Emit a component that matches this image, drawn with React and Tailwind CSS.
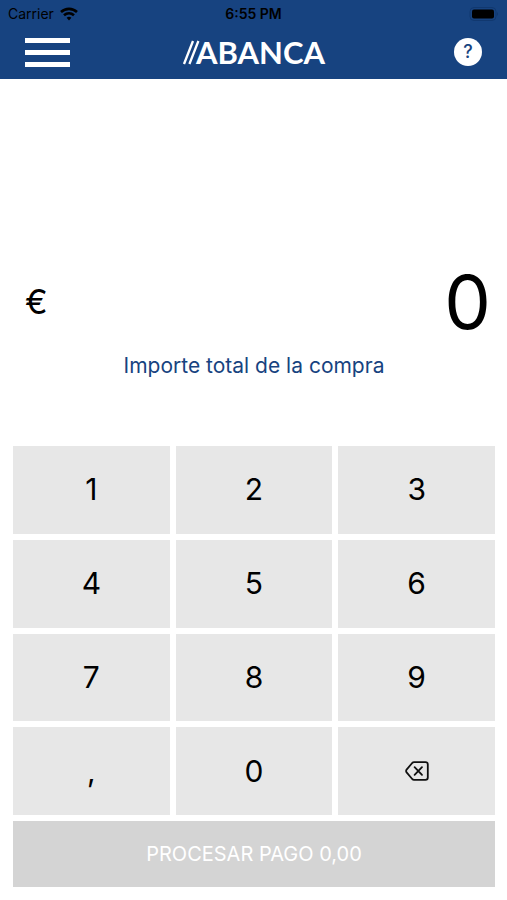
import { useState } from "react";

const KEYS = ["1", "2", "3", "4", "5", "6", "7", "8", "9", ",", "0"];

function StatusBar() {
  return (
    <div className="grid h-7 grid-cols-3 items-center px-2 text-black">
      <div className="flex items-center gap-[6px] text-sm">
        <span>Carrier</span>
        <svg viewBox="0 0 18 14" className="h-[14px] w-[18px]" fill="none" stroke="currentColor" strokeWidth="2.6">
          <path d="M1 5 C5.5 0.8 12.5 0.8 17 5" />
          <path d="M4 8.3 C7 5.6 11 5.6 14 8.3" />
          <path d="M6.6 10.7 Q9 8.8 11.4 10.7 L9 13.4 Z" fill="currentColor" stroke="none" />
        </svg>
      </div>
      <span className="text-center text-sm font-semibold">6:55 PM</span>
      <svg viewBox="0 0 32 14" className="h-[14px] w-8 justify-self-end">
        <rect x="3" y="0.5" width="26" height="13" rx="4" fill="none" stroke="#11386f" />
        <rect x="5" y="2.5" width="22" height="9" rx="2" fill="#000" />
        <path d="M30 5 q2 2 0 4 z" fill="#11386f" />
      </svg>
    </div>
  );
}

function Header() {
  return (
    <header className="bg-[#174380] pb-[3px]">
      <StatusBar />
      <div className="grid h-12 grid-cols-3 items-center px-[25px]">
        <button type="button" aria-label="Menú" className="flex w-[45px] flex-col gap-[7px] justify-self-start">
          <span className="h-[5px] w-full bg-white" />
          <span className="h-[5px] w-full bg-white" />
          <span className="h-[5px] w-full bg-white" />
        </button>
        <div className="flex items-center justify-center pb-px text-white">
          <svg
            viewBox="0 0 14 24"
            className="h-6 w-[14px] overflow-visible"
            stroke="currentColor"
            strokeWidth="2.3"
          >
            <path d="M2 24 L11 1 M7.4 24 L16.4 1" />
          </svg>
          <span className="font-['Lato',sans-serif] text-[31px] leading-8 font-bold">ABANCA</span>
        </div>
        <button
          type="button"
          aria-label="Ayuda"
          className="flex size-7 items-center justify-center justify-self-end rounded-full bg-white text-lg font-medium text-[#174380]"
        >
          ?
        </button>
      </div>
    </header>
  );
}

function BackspaceIcon() {
  return (
    <svg
      viewBox="0 0 24 20"
      className="h-5 w-6"
      fill="none"
      stroke="#111"
      strokeWidth="1.8"
      strokeLinecap="round"
      strokeLinejoin="round"
    >
      <path d="M9 1.2 H20.5 Q22.8 1.2 22.8 3.5 V16.5 Q22.8 18.8 20.5 18.8 H9 Q8 18.8 7.2 18 L1.6 11.4 Q0.6 10 1.6 8.6 L7.2 2 Q8 1.2 9 1.2 Z" />
      <path d="M9.6 6.2 L17 13.8 M17 6.2 L9.6 13.8" />
    </svg>
  );
}

function App() {
  const [amount, setAmount] = useState("0");

  const handleKey = (key) => {
    if (key === "," && amount.includes(",")) return;
    setAmount(amount === "0" && key !== "," ? key : amount + key);
  };

  const handleDelete = () => {
    setAmount(amount.length > 1 ? amount.slice(0, -1) : "0");
  };

  const total = Number(amount.replace(",", "."));

  return (
    <div className="flex min-h-screen flex-col bg-white font-['Inter','Liberation_Sans',sans-serif] text-black">
      <Header />

      <main className="flex flex-1 flex-col pr-3 pb-[13px] pl-[13px]">
        <section className="flex flex-1 flex-col justify-end pb-16">
          <div className="flex items-center justify-between pr-1 pl-3">
            <span className="text-[34px] leading-10">€</span>
            <output className="text-[74px] leading-20">{amount}</output>
          </div>
          <p className="mt-2 text-center text-[21px] leading-8 text-[#174380]">
            Importe total de la compra
          </p>
        </section>

        <div className="grid h-[369px] grid-cols-3 grid-rows-4 gap-[6px]">
          {KEYS.map((key) => (
            <button
              key={key}
              type="button"
              className="bg-[#e7e7e7] text-[30px] active:bg-[#d4d4d4]"
              onClick={() => handleKey(key)}
            >
              {key}
            </button>
          ))}
          <button
            type="button"
            aria-label="Borrar"
            className="flex items-center justify-center bg-[#e7e7e7] active:bg-[#d4d4d4]"
            onClick={handleDelete}
          >
            <BackspaceIcon />
          </button>
        </div>

        <button
          type="button"
          disabled={total === 0}
          className="mt-[6px] h-[66px] bg-[#174380] text-xl text-white disabled:bg-[#d4d4d4]"
        >
          PROCESAR PAGO {total.toFixed(2).replace(".", ",")}
        </button>
      </main>
    </div>
  );
}

export default App;
